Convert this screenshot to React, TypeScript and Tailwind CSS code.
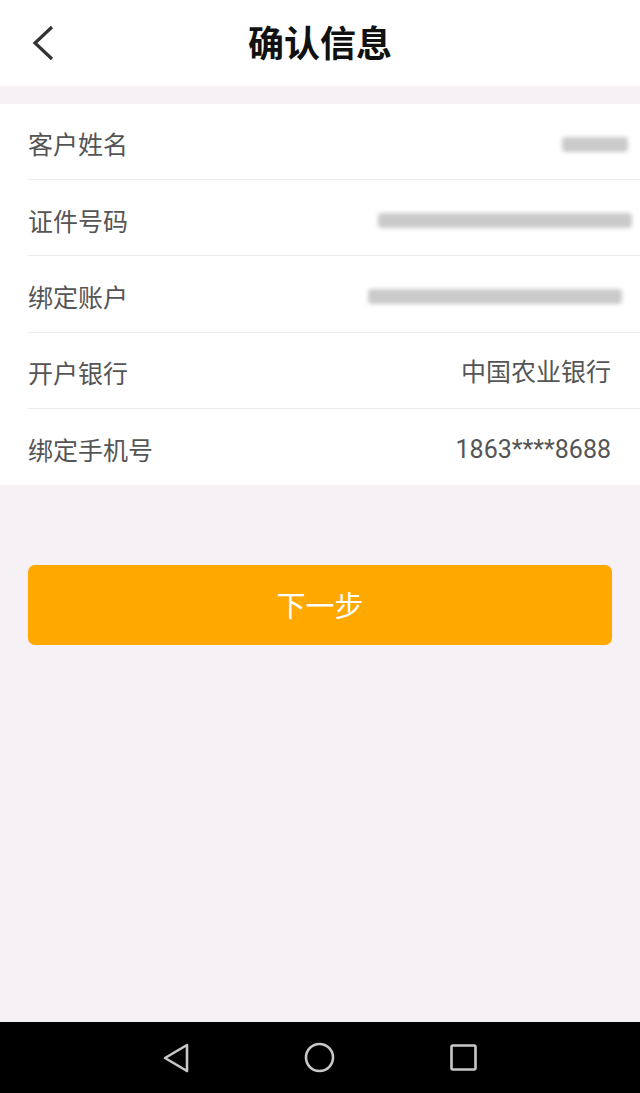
import React from 'react';

const font = { fontFamily: '"Noto Sans CJK SC", Roboto, sans-serif' };

type Row = { label: string; value?: string; blur?: string };

const rows: Row[] = [
    { label: '客户姓名', blur: 'w-[66px] mr-[12px]' },
    { label: '证件号码', blur: 'w-[254px] mr-[8px]' },
    { label: '绑定账户', blur: 'w-[254px] mr-[18px]' },
    { label: '开户银行', value: '中国农业银行' },
    { label: '绑定手机号', value: '1863****8688' },
];

const Blurred = ({ cls }: { cls: string }) => (
    <div className={`h-[15px] ${cls} bg-[#bdbdbd] rounded-sm blur-[2px] opacity-80`} />
);

export default function App() {
    return (
        <div className="w-[640px] h-[1093px] flex flex-col bg-[#f6f1f5]" style={font}>
            {/* header */}
            <div className="h-[86px] bg-white flex items-center relative shrink-0">
                <svg className="absolute left-[30px] top-[25px]" width="26" height="36" viewBox="0 0 26 36">
                    <path d="M22 2 L5 18 L22 34" fill="none" stroke="#333" strokeWidth="3.2" />
                </svg>
                <div className="w-full text-center text-[36px] font-bold text-[#111] leading-none -mt-[4px]">确认信息</div>
            </div>
            <div className="h-[18px] shrink-0" />

            {/* info list */}
            <div className="bg-white pl-[28px]">
                {rows.map((r, i) => (
                    <div
                        key={r.label}
                        className={`h-[76.2px] pt-[5px] flex items-center justify-between ${i < rows.length - 1 ? 'border-b border-[#ececec]' : ''}`}
                    >
                        <span className="text-[25px] text-[#555]">{r.label}</span>
                        {r.value ? (
                            <span className="text-[25px] text-[#555] pr-[29px]" style={{ fontFamily: 'Roboto, "Noto Sans CJK SC", sans-serif' }}>{r.value}</span>
                        ) : (
                            <Blurred cls={r.blur || ''} />
                        )}
                    </div>
                ))}
            </div>

            <div className="px-[28px] pt-[80px]">
                <button className="w-[584px] h-[80px] rounded-[7px] bg-[#ffa800] text-white text-[29px]">下一步</button>
            </div>

            <div className="flex-1" />

            {/* android nav bar */}
            <div className="h-[71px] bg-black flex items-center justify-center gap-[115px] shrink-0">
                <svg width="26" height="32" viewBox="0 0 26 32">
                    <path d="M24 3 L2 16 L24 29 Z" fill="none" stroke="#c8c8c8" strokeWidth="2.6" strokeLinejoin="round" />
                </svg>
                <svg width="31" height="31" viewBox="0 0 31 31">
                    <circle cx="15.5" cy="15.5" r="13.5" fill="none" stroke="#c8c8c8" strokeWidth="2.6" />
                </svg>
                <svg width="27" height="27" viewBox="0 0 27 27">
                    <rect x="1.5" y="1.5" width="24" height="24" rx="1.5" fill="none" stroke="#c8c8c8" strokeWidth="2.6" />
                </svg>
            </div>
        </div>
    );
}
